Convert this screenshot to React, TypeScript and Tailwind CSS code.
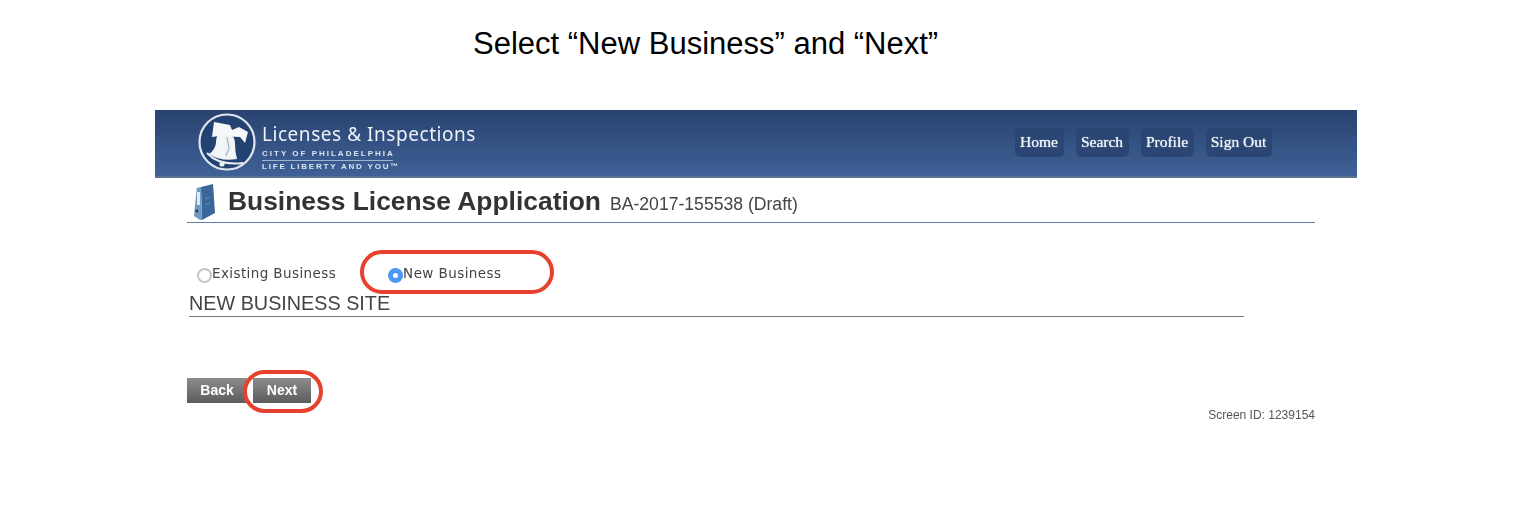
import React from "react";

const sans = { fontFamily: '"Liberation Sans", Arial, sans-serif' };

const navItems = [
  { label: "Home", width: "w-[49px]" },
  { label: "Search", width: "w-[53px]" },
  { label: "Profile", width: "w-[53px]" },
  { label: "Sign Out", width: "w-[66px]" },
];

// Liberty bell badge in the banner
const BellLogo = () => (
  <svg width="60" height="60" viewBox="0 0 60 60" className="shrink-0 mt-[-2px]">
    <circle cx="30" cy="30" r="27.5" fill="#234272" stroke="#dfe6ef" strokeWidth="2.2" />
    {/* yoke */}
    <path d="M17 10 L33 13 L35 18 L42 15 L51 20 L48 31 L43 25 L22 24 L15 25 Z" fill="#f6f7f9" />
    {/* bell body */}
    <path d="M22 22 Q19 24 19 31 Q18 38 12 42 Q24 50 40 47 Q38 40 38 32 Q38 25 34 23 Z" fill="#f2f4f7" />
    <path d="M30 25 L32 36 L29 44" fill="none" stroke="#9fb0c6" strokeWidth="1.2" />
    {/* lip and clapper */}
    <path d="M10 41 Q22 54 46 51" fill="none" stroke="#e8edf3" strokeWidth="2" />
    <circle cx="25" cy="52" r="2.6" fill="#e8edf3" />
  </svg>
);

// Blue ring binder next to the page title
const BinderIcon = () => (
  <svg width="24" height="37" viewBox="0 0 24 37" className="shrink-0">
    <path d="M10 3 L22 0 L24 29 L11 36 Z" fill="#3a6699" />
    <path d="M5.7 4 L10 3 L11 36 L9 36 L3 32 Z" fill="#6f9ac4" />
    <rect x="6" y="8" width="3" height="13" fill="#e3e9f0" />
    <circle cx="5.8" cy="27" r="1.4" fill="#1d3656" />
    <path d="M14 15 L19 13 M14 21 L19 19" stroke="#6f95bd" strokeWidth="0.8" />
  </svg>
);

export default function App() {
  return (
    <div className="w-[1536px] h-[523px] bg-white overflow-hidden" style={sans}>
      <h1 className="pt-[26px] pl-[473px] text-[31px] leading-[36px] text-black font-normal whitespace-nowrap">
        Select “New Business” and “Next”
      </h1>

      <div className="ml-[155px] mt-[48px] w-[1202px] blur-[0.4px]">
        {/* banner */}
        <div className="h-[68px] flex items-center justify-between bg-gradient-to-b from-[#294370] to-[#3f6197] border-b-2 border-[#5d7396] pl-[42px] pr-[85px]">
          <div className="flex items-center gap-[5px]">
            <BellLogo />
            <div className="pt-[7px]">
              <div className="text-[19px] leading-[24px] tracking-[0.54px] text-[#eef2f7] whitespace-nowrap" style={{ fontFamily: '"Noto Sans", sans-serif' }}>
                Licenses &amp; Inspections
              </div>
              <div className="mt-[3px] w-[131px] pb-[1px] border-b border-[#9db3d0] text-[8px] leading-[10px] font-bold tracking-[2px] text-[#dbe3ee] whitespace-nowrap">
                CITY OF PHILADELPHIA
              </div>
              <div className="mt-[1px] text-[8px] leading-[10px] font-bold tracking-[1.8px] text-[#dbe3ee] whitespace-nowrap">
                LIFE LIBERTY AND YOU™
              </div>
            </div>
          </div>
          <nav className="flex gap-[12px] mt-[-2px]">
            {navItems.map((item) => (
              <a
                key={item.label}
                className={`${item.width} h-[29px] pr-[1px] rounded-[5px] bg-[#2b4674] flex items-center justify-center text-[15.5px] text-[#f0f3f7] whitespace-nowrap [text-shadow:0_0_1px_#ffffff]`}
                style={{ fontFamily: '"Liberation Serif", serif' }}
              >
                {item.label}
              </a>
            ))}
          </nav>
        </div>

        {/* page heading */}
        <div className="ml-[32px] w-[1128px] h-[45px] border-b border-[#5f7cab] flex items-start">
          <div className="pt-[6px] pl-[4px]">
            <BinderIcon />
          </div>
          <div className="pt-[6px] pl-[13px] flex items-baseline gap-[9px] whitespace-nowrap">
            <span className="text-[26.4px] leading-[34px] font-bold text-[#333333]">Business License Application</span>
            <span className="text-[17.6px] text-[#444444]">BA-2017-155538 (Draft)</span>
          </div>
        </div>

        {/* business type radios */}
        <div className="ml-[42px] mt-[37px] h-[31px] flex items-center text-[#444444] text-[13.5px]" style={{ fontFamily: '"DejaVu Sans", sans-serif' }}>
          <span className="w-[15px] h-[15px] rounded-full border-2 border-[#c4c4c4] bg-white shrink-0" />
          <span className="pb-[4px] tracking-[0.4px] whitespace-nowrap">Existing Business</span>
          <div className="relative ml-[52px] flex items-center">
            <span className="absolute left-[-28px] top-[-13px] w-[194px] h-[44px] rounded-[22px] border-[4px] border-[#e5412c]" />
            <span className="w-[15px] h-[15px] rounded-full bg-[#4f97f3] flex items-center justify-center shrink-0">
              <span className="w-[5px] h-[5px] rounded-full bg-white" />
            </span>
            <span className="pb-[4px] tracking-[0.42px] whitespace-nowrap">New Business</span>
          </div>
        </div>

        {/* section title */}
        <div className="ml-[34px] w-[1055px] h-[26px] border-b-[1.5px] border-[#7a7a7a] text-[19.8px] leading-[24px] text-[#444444] whitespace-nowrap">
          NEW BUSINESS SITE
        </div>

        {/* form actions */}
        <div className="ml-[32px] mt-[61px] flex gap-[6px]">
          <button className="w-[60px] h-[25px] bg-gradient-to-b from-[#8d8d8d] to-[#5c5c5c] text-white text-[14px] font-bold">
            Back
          </button>
          <div className="relative">
            <span className="absolute left-[-10px] top-[-8px] w-[80px] h-[43px] rounded-[22px] border-[4px] border-[#e5412c]" />
            <button className="w-[58px] h-[25px] bg-gradient-to-b from-[#8d8d8d] to-[#5c5c5c] text-white text-[14px] font-bold">
              Next
            </button>
          </div>
        </div>

        <div className="w-[1160px] mt-[5px] text-right text-[12px] leading-[14px] text-[#555555]">Screen ID: 1239154</div>
      </div>
    </div>
  );
}
